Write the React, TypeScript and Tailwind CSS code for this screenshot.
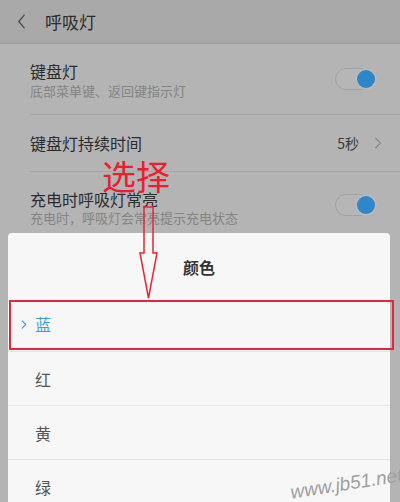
import React from 'react';

const font = { fontFamily: '"Noto Sans CJK SC", "Noto Sans", sans-serif' };

const Toggle: React.FC<{ className?: string }> = ({ className = '' }) => (
  <div className={`w-[42px] h-[22px] rounded-full border border-[#a2a2a2] bg-[#b6b6b6] flex items-center justify-end pr-[1px] ${className}`}>
    <div className="w-[18px] h-[18px] rounded-full bg-[#2f86c9] ring-2 ring-[#b9b9b9]" />
  </div>
);

const Chevron: React.FC<{ className?: string; color: string; w?: number }> = ({ className, color, w = 1.6 }) => (
  <svg viewBox="0 0 10 16" className={className} fill="none" stroke={color} strokeWidth={w} strokeLinecap="round" strokeLinejoin="round">
    <path d="M2 2 L8 8 L2 14" />
  </svg>
);

const colors = ['蓝', '红', '黄', '绿'];

const App: React.FC = () => {
  return (
    <div className="relative w-[400px] h-[502px] overflow-hidden bg-[#b4b4b4]" style={font}>
      {/* header */}
      <div className="h-[44px] bg-[#a9a9a9] border-b border-[#9f9f9f] flex items-center">
        <svg viewBox="0 0 10 16" className="w-[9px] h-[15px] ml-[17px]" fill="none" stroke="#4a4a4a" strokeWidth={1.4} strokeLinecap="round" strokeLinejoin="round">
          <path d="M8 1 L2 8 L8 15" />
        </svg>
        <span className="ml-[19px] text-[17px] text-[#2c2c2c]">呼吸灯</span>
      </div>

      {/* row 1 */}
      <div className="h-[71px] ml-[30px] pr-[23px] border-b border-[#a6a6a6] flex items-center justify-between">
        <div className="flex flex-col pt-[3px]">
          <span className="text-[16px] leading-[20px] text-[#2c2c2c]">键盘灯</span>
          <span className="text-[13px] leading-[18px] mt-[1px] text-[#858585]">底部菜单键、返回键指示灯</span>
        </div>
        <Toggle />
      </div>

      {/* row 2 */}
      <div className="h-[57px] ml-[30px] pr-[18px] border-b border-[#a6a6a6] flex items-center justify-between">
        <span className="text-[16px] text-[#2c2c2c]">键盘灯持续时间</span>
        <div className="flex items-center gap-[15px]">
          <span className="text-[14px] text-[#3a3a3a]">5秒</span>
          <Chevron className="w-[8px] h-[14px]" color="#7c7c7c" w={1.3} />
        </div>
      </div>

      {/* row 3 */}
      <div className="h-[61px] ml-[30px] pr-[23px] flex items-start justify-between">
        <div className="flex flex-col pt-[17px]">
          <span className="text-[16px] leading-[20px] text-[#2c2c2c]">充电时呼吸灯常亮</span>
          <span className="text-[13px] leading-[18px] text-[#858585]">充电时，呼吸灯会常亮提示充电状态</span>
        </div>
        <Toggle className="mt-[22px]" />
      </div>

      {/* dialog */}
      <div className="absolute left-[8px] right-[10px] top-[233px] bottom-0 bg-[#f7f7f7] rounded-t-[4px]">
        <div className="h-[64px] flex items-center justify-center pt-[4px]">
          <span className="text-[16px] font-bold text-[#333]">颜色</span>
        </div>
        {colors.map((c, i) => (
          <div key={c} className={`h-[54px] flex items-center ${i > 0 ? 'border-t border-[#e6e6e6]' : ''}`}>
            {i === 0 ? (
              <>
                <Chevron className="ml-[13px] w-[6px] h-[11px]" color="#3b9de0" w={1.8} />
                <span className="ml-[8px] text-[16px] text-[#3b9de0]">{c}</span>
              </>
            ) : (
              <span className="ml-[27px] text-[16px] text-[#555]">{c}</span>
            )}
          </div>
        ))}
      </div>

      {/* annotation: highlight box */}
      <div className="absolute left-[9px] top-[300px] w-[385px] h-[50px] border-2 border-[#e2293b]" />

      {/* annotation: text */}
      <div className="absolute left-[102px] top-[156px] text-[34px] leading-[40px] text-[#ee1c2c]" style={font}>
        选择
      </div>

      {/* annotation: arrow */}
      <svg className="absolute left-[138px] top-[206px] w-[22px] h-[95px]" viewBox="0 0 22 95" fill="none" stroke="#e2293b" strokeWidth={1.5} strokeLinejoin="miter">
        <path d="M6 1 L15 1 L15 47 L19 47 L10.5 92 L2 47 L6 47 Z" />
      </svg>

      {/* watermark */}
      <div
        className="absolute left-[290px] top-[470px] text-[19px] italic text-[#a0a0a0] -rotate-[9deg]"
        style={{ fontFamily: '"Liberation Sans", sans-serif' }}
      >
        www.jb51.net
      </div>
    </div>
  );
};

export default App;
